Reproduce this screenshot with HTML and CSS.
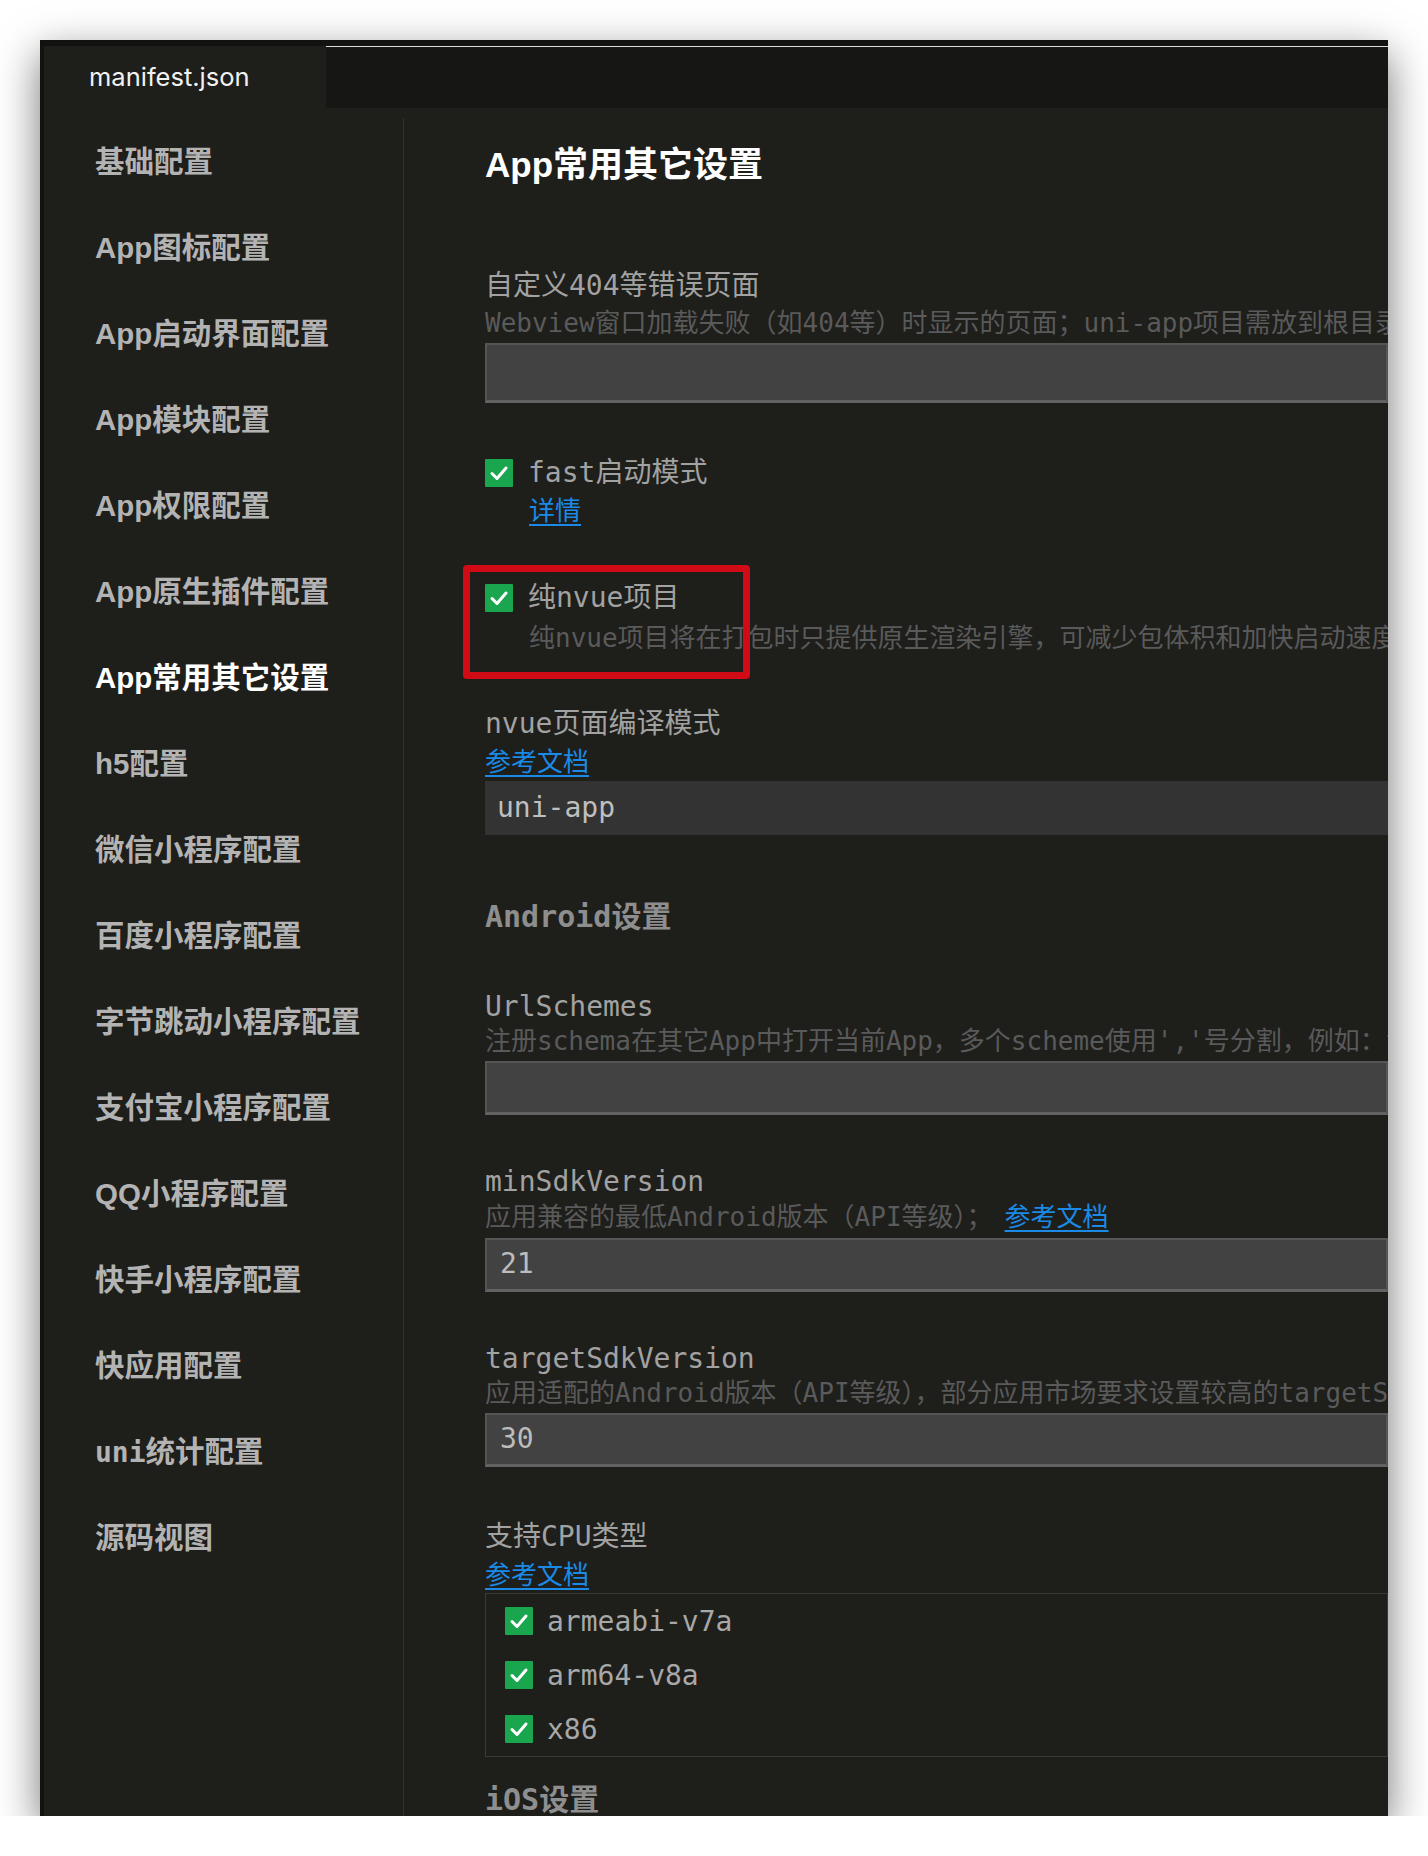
FILE: index.html
```html
<!DOCTYPE html>
<html lang="zh-CN">
<head>
    <meta charset="UTF-8">
    <title>manifest.json</title>
    <link rel="stylesheet" href="styles.css">
</head>
<body>

    <div class="window">
        <!-- Barra de abas -->
        <div class="tabbar">
            <div class="tab">manifest.json</div>
            <div class="tab-rest"></div>
        </div>

        <div class="panes">
            <ul class="sidebar">
                <li>基础配置</li>
                <li>App图标配置</li>
                <li>App启动界面配置</li>
                <li>App模块配置</li>
                <li>App权限配置</li>
                <li>App原生插件配置</li>
                <li class="active">App常用其它设置</li>
                <li>h5配置</li>
                <li>微信小程序配置</li>
                <li>百度小程序配置</li>
                <li>字节跳动小程序配置</li>
                <li>支付宝小程序配置</li>
                <li>QQ小程序配置</li>
                <li>快手小程序配置</li>
                <li>快应用配置</li>
                <li><span class="mono">uni</span>统计配置</li>
                <li>源码视图</li>
            </ul>

            <div class="main">
                <h1 class="title">App常用其它设置</h1>

                <div class="field first">
                    <div class="label">自定义404等错误页面</div>
                    <div class="desc">Webview窗口加载失败（如404等）时显示的页面；uni-app项目需放到根目录static下，如：/static/404.html</div>
                    <div class="input tall"></div>
                </div>

                <div class="field fast">
                    <div class="check-row">
                        <span class="checkbox"><svg viewBox="0 0 28 28"><polyline points="7,14.5 12,19.5 21,9"/></svg></span>
                        <span class="label">fast启动模式</span>
                    </div>
                    <div class="indent"><a class="link" href="#">详情</a></div>
                </div>

                <div class="field marked">
                    <div class="check-row">
                        <span class="checkbox"><svg viewBox="0 0 28 28"><polyline points="7,14.5 12,19.5 21,9"/></svg></span>
                        <span class="label">纯nvue项目</span>
                    </div>
                    <div class="desc indent spaced">纯nvue项目将在打包时只提供原生渲染引擎，可减少包体积和加快启动速度</div>
                    <div class="highlight"></div>
                </div>

                <div class="field">
                    <div class="label">nvue页面编译模式</div>
                    <div><a class="link" href="#">参考文档</a></div>
                    <div class="select">uni-app</div>
                </div>

                <div class="section">Android设置</div>

                <div class="field compact">
                    <div class="label">UrlSchemes</div>
                    <div class="desc">注册schema在其它App中打开当前App，多个scheme使用','号分割，例如：test1,test2</div>
                    <div class="input"></div>
                </div>

                <div class="field compact sdk">
                    <div class="label">minSdkVersion</div>
                    <div class="desc">应用兼容的最低Android版本（API等级）；<a class="link gap" href="#">参考文档</a></div>
                    <div class="input">21</div>
                </div>

                <div class="field compact sdk">
                    <div class="label">targetSdkVersion</div>
                    <div class="desc">应用适配的Android版本（API等级），部分应用市场要求设置较高的targetSdkVersion才能提交审核</div>
                    <div class="input">30</div>
                </div>

                <div class="field cpu">
                    <div class="label">支持CPU类型</div>
                    <div class="link-line"><a class="link" href="#">参考文档</a></div>
                    <div class="cpu-box">
                        <div class="cpu-row">
                            <span class="checkbox"><svg viewBox="0 0 28 28"><polyline points="7,14.5 12,19.5 21,9"/></svg></span>
                            <span>armeabi-v7a</span>
                        </div>
                        <div class="cpu-row">
                            <span class="checkbox"><svg viewBox="0 0 28 28"><polyline points="7,14.5 12,19.5 21,9"/></svg></span>
                            <span>arm64-v8a</span>
                        </div>
                        <div class="cpu-row">
                            <span class="checkbox"><svg viewBox="0 0 28 28"><polyline points="7,14.5 12,19.5 21,9"/></svg></span>
                            <span>x86</span>
                        </div>
                    </div>
                </div>

                <div class="section last">iOS设置</div>
            </div>
        </div>
    </div>

</body>
</html>
```

FILE: styles.css
```css
:root {
    --window-bg: #1e1e1b;
    --frame: #121211;
    --tabbar-bg: #161614;
    --divider: #323230;
    --nav-color: #b3b3b3;
    --label-color: #a2a2a2;
    --desc-color: #5a5a5a;
    --link-color: #1a8ae6;
    --input-bg: #424242;
    --input-border: #555;
    --check-green: #19a64f;
}

body {
    margin: 0;
    background: #fff;
}

.window {
    width: 1348px;
    height: 1776px;
    margin: 40px 0 0 40px;
    box-sizing: border-box;
    background: var(--window-bg);
    border-top: 6px solid var(--frame);
    border-left: 4px solid var(--frame);
    box-shadow: 0 14px 40px rgba(0, 0, 0, 0.55);
    display: flex;
    flex-direction: column;
    overflow: hidden;
}

/* Abas */
.tabbar {
    display: flex;
    align-items: flex-end;
    height: 62px;
    flex-shrink: 0;
}

.tab {
    width: 282px;
    height: 61px;
    box-sizing: border-box;
    padding: 10px 0 0 45px;
    background: var(--window-bg);
    color: #f2f2f2;
    font-family: Inter, "Liberation Sans", sans-serif;
    font-size: 25.5px;
    line-height: 40px;
}

.tab-rest {
    flex: 1;
    height: 61px;
    background: var(--tabbar-bg);
    border-top: 1px solid #dcdcdc;
}

.panes {
    flex: 1;
    display: flex;
    padding-top: 10px;
    min-height: 0;
}

/* Menu lateral */
.sidebar {
    width: 360px;
    flex-shrink: 0;
    box-sizing: border-box;
    margin: 0;
    padding: 1px 0 0 51px;
    list-style: none;
    border-right: 1px solid var(--divider);
    font-family: "Liberation Sans", "Noto Sans CJK SC", sans-serif;
    font-weight: bold;
    font-size: 29.5px;
    color: var(--nav-color);
}

.sidebar li {
    height: 86px;
    line-height: 86px;
    white-space: nowrap;
}

.sidebar li.active {
    color: #fff;
}

.sidebar .mono {
    font-family: "DejaVu Sans Mono", monospace;
    font-size: 28px;
}

/* Conteúdo */
.main {
    flex: 1;
    min-width: 0;
    padding-left: 81px;
    font-family: "DejaVu Sans Mono", "Noto Sans CJK SC", monospace;
    color: var(--label-color);
}

.title {
    margin: 27px 0 0;
    font-family: "Liberation Sans", "Noto Sans CJK SC", sans-serif;
    font-size: 35px;
    line-height: 40px;
    font-weight: bold;
    color: #fff;
}

.field {
    margin-top: 48px;
    position: relative;
}

.field.first {
    margin-top: 82px;
}

.field.fast {
    margin-top: 51px;
}

.field.marked {
    margin-top: 49px;
}

.field.sdk {
    margin-top: 48px;
}

.field.cpu {
    margin-top: 51px;
}

.label {
    font-size: 28px;
    line-height: 38px;
    color: var(--label-color);
    white-space: nowrap;
}

.compact .label {
    padding-top: 3px;
    line-height: 32px;
}

.desc {
    font-size: 26px;
    line-height: 36px;
    color: var(--desc-color);
    white-space: nowrap;
}

.desc.spaced {
    margin-top: 2px;
    line-height: 38px;
}

.indent {
    padding-left: 44px;
}

.link {
    font-size: 26px;
    line-height: 38px;
    color: var(--link-color);
    text-decoration: underline;
    text-underline-offset: 4px;
}

.link.gap {
    margin-left: 12px;
}

.link-line {
    height: 35px;
}

.input {
    height: 54px;
    margin-top: 2px;
    box-sizing: border-box;
    padding-left: 13px;
    background: var(--input-bg);
    border: 2px solid var(--input-border);
    border-bottom: 3px solid #626262;
    font-size: 28px;
    line-height: 48px;
    color: #bcbcbc;
}

.input.tall {
    height: 60px;
}

.select {
    height: 54px;
    padding-left: 12px;
    background: #333;
    font-size: 28px;
    line-height: 54px;
    color: #bfbfbf;
}

.check-row {
    display: flex;
    align-items: center;
    gap: 15px;
    height: 38px;
}

.checkbox {
    width: 28px;
    height: 28px;
    flex-shrink: 0;
    background: var(--check-green);
    border-radius: 1px;
    display: flex;
}

.checkbox svg {
    width: 28px;
    height: 28px;
    fill: none;
    stroke: #fff;
    stroke-width: 3;
    stroke-linecap: round;
    stroke-linejoin: round;
}

/* Destaque vermelho */
.highlight {
    position: absolute;
    left: -22px;
    top: -14px;
    width: 287px;
    height: 114px;
    box-sizing: border-box;
    border: 7px solid #d00b15;
    border-radius: 4px;
}

.section {
    margin-top: 63px;
    font-size: 30px;
    line-height: 38px;
    font-weight: bold;
    color: #8e8e8e;
}

.section + .field {
    margin-top: 52px;
}

.section.last {
    margin-top: 24px;
}

.cpu-box {
    margin-top: 2px;
    border: 1px solid #393937;
    padding-left: 19px;
}

.cpu-row {
    height: 54px;
    display: flex;
    align-items: center;
    gap: 14px;
    font-size: 28px;
    color: #a8a8a8;
}
```
